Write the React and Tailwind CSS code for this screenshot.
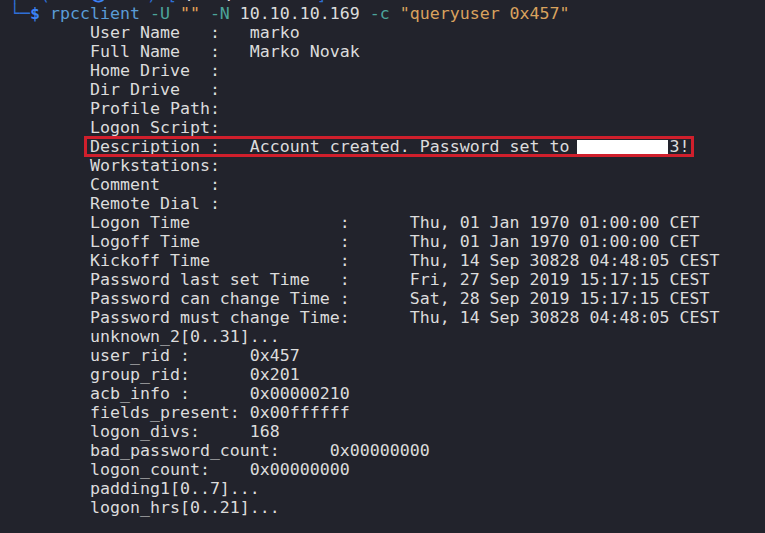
export default function App() {
    const fields = [
        'User Name   :   marko',
        'Full Name   :   Marko Novak',
        'Home Drive  :',
        'Dir Drive   :',
        'Profile Path:',
        'Logon Script:',
    ];
    const after = [
        'Workstations:',
        'Comment     :',
        'Remote Dial :',
        'Logon Time               :      Thu, 01 Jan 1970 01:00:00 CET',
        'Logoff Time              :      Thu, 01 Jan 1970 01:00:00 CET',
        'Kickoff Time             :      Thu, 14 Sep 30828 04:48:05 CEST',
        'Password last set Time   :      Fri, 27 Sep 2019 15:17:15 CEST',
        'Password can change Time :      Sat, 28 Sep 2019 15:17:15 CEST',
        'Password must change Time:      Thu, 14 Sep 30828 04:48:05 CEST',
        'unknown_2[0..31]...',
        'user_rid :      0x457',
        'group_rid:      0x201',
        'acb_info :      0x00000210',
        'fields_present: 0x00ffffff',
        'logon_divs:     168',
        'bad_password_count:     0x00000000',
        'logon_count:    0x00000000',
        'padding1[0..7]...',
        'logon_hrs[0..21]...',
    ];

    return (
        <div className="w-[765px] h-[533px] overflow-hidden bg-[#22232c] text-[#dcdcdc] text-[16.6px] leading-[19px] whitespace-pre" style={{ fontFamily: '"DejaVu Sans Mono", "Liberation Mono", monospace' }}>
            <div className="-mt-[15px] pl-[10px]">
                <div className="h-[19px]">
                    <span className="text-[#2f6fd6]">┌──(</span>
                    <span className="text-[#3b82f6] font-bold">kali㉿kali</span>
                    <span className="text-[#2f6fd6]">)-[</span>
                    <span className="font-bold">~/htb/resolute</span>
                    <span className="text-[#2f6fd6]">]</span>
                </div>
                <div className="h-[19px]">
                    <span className="text-[#2f6fd6]">└─</span>
                    <span className="text-[#3b82f6] font-bold">$</span>
                    {' '}
                    <span className="text-[#5a9cd6]">rpcclient</span>
                    {' '}
                    <span className="text-[#4ca39b]">-U</span>
                    {' '}
                    <span className="text-[#e0a458]">""</span>
                    {' '}
                    <span className="text-[#4ca39b]">-N</span>
                    {' 10.10.10.169 '}
                    <span className="text-[#4ca39b]">-c</span>
                    {' '}
                    <span className="text-[#d9a25e]">"queryuser 0x457"</span>
                </div>

                <div className="pl-[80px]">
                    {fields.map((line) => (
                        <div key={line} className="h-[19px]">{line}</div>
                    ))}

                    <div className="relative h-[19px]">
                        <div className="absolute -left-[6px] -top-px w-[610px] h-[21px] border-[3px] border-[#d01f2c]"></div>
                        Description :   Account created. Password set to <span className="inline-block -ml-[3px] mr-[2px] w-[91px] h-[14px] bg-white align-[-2px]"></span>3!
                    </div>

                    {after.map((line) => (
                        <div key={line} className="h-[19px]">{line}</div>
                    ))}
                </div>
            </div>
        </div>
    );
}
